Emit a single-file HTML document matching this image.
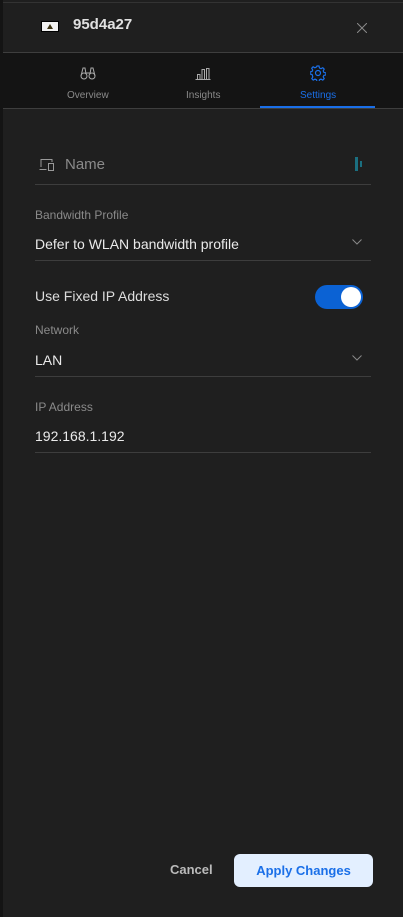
<!DOCTYPE html>
<html><head><style>
*{margin:0;padding:0;box-sizing:border-box}
body{width:403px;height:917px;background:#1f1f1f;font-family:"Liberation Sans",sans-serif;position:relative;overflow:hidden;color:#e6e6e6}
.strip{position:absolute;left:0;top:0;width:3px;height:917px;background:#141414}
.abs{position:absolute}
.lbl{position:absolute;left:35px;font-size:12px;color:#8a8a8a}
.val{position:absolute;left:35px;font-size:14px;color:#eaeaea}
.line{position:absolute;left:35px;width:336px;height:1px;background:#3d3d3d}
.chev{position:absolute;left:352px;width:10px;height:6px}
</style></head><body>
<div class="strip"></div>
<div class="abs" style="left:3px;top:2px;width:400px;height:1px;background:#333"></div>
<div class="abs" style="left:41px;top:21px;width:18px;height:11px;background:#f0f0f0;border:1px solid #000"></div>
<div class="abs" style="left:47px;top:24px;width:0;height:0;border-left:3px solid transparent;border-right:3px solid transparent;border-bottom:5px solid #3a3010"></div>
<div class="abs" style="left:73px;top:16px;font-size:15px;font-weight:bold;color:#e0e0e0">95d4a27</div>
<svg class="abs" style="left:357px;top:23px" width="10" height="10"><path d="M0 0L10 10M10 0L0 10" stroke="#8a8a8a" stroke-width="1"/></svg>
<div class="abs" style="left:3px;top:52px;width:400px;height:1px;background:#3e3e3e"></div>
<div class="abs" style="left:3px;top:53px;width:400px;height:55px;background:#141414"></div>
<div class="abs" style="left:3px;top:108px;width:400px;height:1px;background:#3e3e3e"></div>
<svg class="abs" style="left:80px;top:66px" width="16" height="14" fill="none" stroke="#aaa" stroke-width="1"><circle cx="4" cy="10" r="3"/><circle cx="12" cy="10" r="3"/><path d="M1 10L3 2h2l1 6M15 10L13 2h-2l-1 6M6 7h4"/></svg>
<div class="abs" style="left:67px;top:90px;font-size:10px;color:#8a8a8a">Overview</div>
<svg class="abs" style="left:195px;top:66px" width="16" height="14" fill="none" stroke="#aaa" stroke-width="1"><path d="M.5 13.5h15M2.5 13V8.5h2.5V13M7 13V3.5h2.5V13M11.5 13V2.5H14V13"/></svg>
<div class="abs" style="left:186px;top:90px;font-size:10px;color:#8a8a8a">Insights</div>
<svg class="abs" style="left:310px;top:65px" width="16" height="16" fill="none" stroke="#1a6fe8" stroke-width="1.2"><circle cx="8" cy="8" r="2.5"/><path d="M7 1h2l.5 2 1.5.7 1.8-1 1.4 1.4-1 1.8.7 1.5 2 .5v2l-2 .5-.7 1.5 1 1.8-1.4 1.4-1.8-1-1.5.7-.5 2H7l-.5-2-1.5-.7-1.8 1-1.4-1.4 1-1.8L2.1 9.5 0 9V7l2-.5.7-1.5-1-1.8 1.4-1.4 1.8 1 1.5-.7z"/></svg>
<div class="abs" style="left:300px;top:90px;font-size:10px;color:#1a6fe8">Settings</div>
<div class="abs" style="left:260px;top:106px;width:115px;height:2px;background:#1a6fe8"></div>
<svg class="abs" style="left:39px;top:158px" width="16" height="14" fill="none" stroke="#999" stroke-width="1"><path d="M2 9V1.5h11V4M.5 11.5h7"/><rect x="9.5" y="5.5" width="5" height="7"/></svg>
<div class="abs" style="left:65px;top:156px;font-size:15px;color:#8a8a8a">Name</div>
<div class="abs" style="left:355px;top:157px;width:3px;height:14px;background:#1b6f80"></div>
<div class="abs" style="left:360px;top:161px;width:2px;height:6px;background:#1b6f80"></div>
<div class="line" style="top:184px"></div>
<div class="lbl" style="top:208px">Bandwidth Profile</div>
<div class="val" style="top:236px">Defer to WLAN bandwidth profile</div>
<svg class="chev" style="top:239px" width="10" height="6"><path d="M.5 .5l4.5 4.5 4.5-4.5" stroke="#888" fill="none"/></svg>
<div class="line" style="top:260px"></div>
<div class="val" style="top:288px;color:#ddd">Use Fixed IP Address</div>
<div class="abs" style="left:315px;top:285px;width:48px;height:24px;border-radius:12px;background:#0b62d4"></div>
<div class="abs" style="left:341px;top:287px;width:20px;height:20px;border-radius:50%;background:#fff"></div>
<div class="lbl" style="top:323px">Network</div>
<div class="val" style="top:352px">LAN</div>
<svg class="chev" style="top:355px" width="10" height="6"><path d="M.5 .5l4.5 4.5 4.5-4.5" stroke="#888" fill="none"/></svg>
<div class="line" style="top:376px"></div>
<div class="lbl" style="top:400px">IP Address</div>
<div class="val" style="top:428px">192.168.1.192</div>
<div class="line" style="top:452px"></div>
<div class="abs" style="left:170px;top:862px;font-size:13px;font-weight:bold;color:#bbb">Cancel</div>
<div class="abs" style="left:234px;top:854px;width:139px;height:33px;border-radius:6px;background:#e3efff;color:#1a6fe8;font-size:13px;font-weight:bold;text-align:center;line-height:33px">Apply Changes</div>
</body></html>
